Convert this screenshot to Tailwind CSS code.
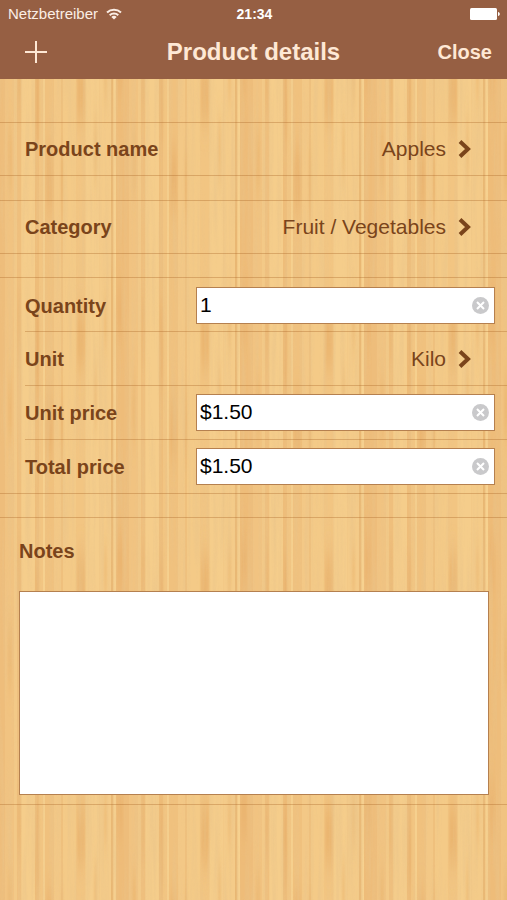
<!DOCTYPE html>
<html lang="en">
<head>
<meta charset="utf-8">
<meta name="viewport" content="width=device-width, initial-scale=1">
<title>Product details</title>
<script src="https://cdn.jsdelivr.net/npm/@tailwindcss/browser@4"></script>
</head>
<body class="relative isolate min-h-screen overflow-x-hidden bg-[#f0c381] font-['Liberation_Sans',Arial,sans-serif] text-[#7a441b]">

<!-- Bamboo backdrop -->
<svg class="absolute inset-0 -z-10 h-full w-full" aria-hidden="true">
  <defs>
    <filter id="soft" x="-20" y="-40" width="164" height="328" filterUnits="userSpaceOnUse"><feGaussianBlur stdDeviation="0.8 14"/></filter>
    <filter id="grain" x="0" y="0" width="1" height="1">
      <feTurbulence type="fractalNoise" baseFrequency="0.22 0.009" numOctaves="3" seed="4"/>
      <feColorMatrix values="0 0 0 0 0.82  0 0 0 0 0.55  0 0 0 0 0.25  1.3 0 0 0 -0.48"/>
    </filter>
    <pattern id="bamboo" width="124" height="248" patternUnits="userSpaceOnUse">
      <rect width="124" height="248" fill="#f3c987"/>
      <g>
        <rect x="0" width="5" height="248" fill="#eebd7b"/>
        <rect x="5" width="9" height="248" fill="#f1c381"/>
        <rect x="17" width="4" height="248" fill="#efbf7d"/>
        <rect x="22" width="13" height="248" fill="#f5cd8b"/>
        <rect x="35" width="4" height="248" fill="#eebd7a"/>
        <rect x="39" width="4" height="248" fill="#f2c582"/>
        <rect x="43" width="2" height="248" fill="#f6d08e"/>
        <rect x="45" width="9" height="248" fill="#f0c17e"/>
        <rect x="54" width="7" height="248" fill="#f3c886"/>
        <rect x="61" width="2" height="248" fill="#efc07d"/>
        <rect x="63" width="13" height="248" fill="#f4ca87"/>
        <rect x="76" width="9" height="248" fill="#f2c582"/>
        <rect x="86" width="13" height="248" fill="#f5cd8b"/>
        <rect x="100" width="11" height="248" fill="#f4cb89"/>
        <rect x="111" width="2" height="248" fill="#e9b773"/>
        <rect x="114" width="2" height="248" fill="#f7d290"/>
        <rect x="116" width="8" height="248" fill="#eebc79"/>
      </g>
      <g filter="url(#soft)" fill="#e5a962">
        <path d="M46 150h7v60h-7z" opacity=".5"/>
        <path d="M77 60h8v60h-8z" opacity=".55"/>
        <path d="M117 40h6v50h-6z" opacity=".35"/>
        <path d="M61 150h2v60h-2zM36 60h3v80h-3zM18 50h2v60h-2z" opacity=".5"/>
        <path d="M94 120h3v60h-3zM104 50h3v50h-3zM8 130h4v60h-4z" opacity=".4"/>
      </g>
    </pattern>
  </defs>
  <rect width="100%" height="100%" fill="url(#bamboo)"/>
  <rect width="100%" height="100%" filter="url(#grain)" opacity=".9"/>
</svg>

<header class="h-[79px] bg-[#965f43] text-[#fee8d5]">
  <div class="grid h-7 grid-cols-3 items-center pr-[6px] pl-2 text-white">
    <div class="flex items-center gap-[8px] text-[15px] leading-5 text-[#fbeee5]">
      <span>Netzbetreiber</span>
      <svg class="h-3 w-4 shrink-0" viewBox="0 0 16 12" fill="none" stroke="currentColor" stroke-width="2" role="img" aria-label="Wi-Fi">
        <path d="M1 4.400a10.300 10.300 0 0 1 14 0"/>
        <path d="M3.700 7.200a6.300 6.300 0 0 1 8.600 0"/>
        <path d="M8 11.600 5.300 9a3.900 3.900 0 0 1 5.400 0z" fill="currentColor" stroke="none"/>
      </svg>
    </div>
    <time class="text-center text-[14px] leading-5 font-bold">21:34</time>
    <svg class="h-3 w-[31px] justify-self-end" viewBox="0 0 31 12" fill="#fff" role="img" aria-label="Battery full">
      <rect width="27" height="12" rx="1.500"/>
      <path d="M28 4c2.400 .5 2.400 3.500 0 4z"/>
    </svg>
  </div>
  <div class="grid h-12 grid-cols-[1fr_auto_1fr] items-center px-[15px]">
    <button type="button" aria-label="Add" class="ml-[10px] size-[22px] justify-self-start">
      <svg class="size-full" viewBox="0 0 22 22" stroke="currentColor" stroke-width="2"><path d="M0 11h22M11 0v22"/></svg>
    </button>
    <h1 class="text-[24px] leading-7 font-bold">Product details</h1>
    <button type="button" class="justify-self-end text-[20px] leading-6 font-bold">Close</button>
  </div>
</header>

<main class="pt-[43px]">
  <section class="border-y border-[#a86426]/35">
    <button type="button" class="flex h-[52px] w-full items-center pr-9 pl-[25px]">
      <span class="text-[20px] leading-6 font-bold">Product name</span>
      <span class="ml-auto text-[21px] leading-6">Apples</span>
      <svg class="ml-3 h-[18px] w-[13px]" viewBox="0 0 13 18" fill="none" stroke="currentColor" stroke-width="4" aria-hidden="true"><path d="M2 1.500 10 9 2 16.500"/></svg>
    </button>
  </section>

  <section class="mt-6 border-y border-[#a86426]/35">
    <button type="button" class="flex h-[52px] w-full items-center pr-9 pl-[25px]">
      <span class="text-[20px] leading-6 font-bold">Category</span>
      <span class="ml-auto text-[21px] leading-6">Fruit / Vegetables</span>
      <svg class="ml-3 h-[18px] w-[13px]" viewBox="0 0 13 18" fill="none" stroke="currentColor" stroke-width="4" aria-hidden="true"><path d="M2 1.500 10 9 2 16.500"/></svg>
    </button>
  </section>

  <section class="mt-[23px] border-y border-[#a86426]/35 pl-[25px]">
    <div class="flex h-[54px] items-center border-b border-[#a86426]/35 pt-[2px] pr-3">
      <label for="quantity" class="w-[171px] shrink-0 text-[20px] leading-6 font-bold">Quantity</label>
      <div class="relative min-w-0 flex-1">
        <input id="quantity" type="text" value="1" class="block h-[37px] w-full border border-[#b5804f] bg-white pr-8 pb-[2px] pl-[3px] text-[21px] text-black outline-none">
        <button type="button" aria-label="Clear quantity" class="absolute top-[10px] right-[6px] size-[17px]">
          <svg class="size-full" viewBox="0 0 17 17"><circle cx="8.500" cy="8.500" r="8.500" fill="#c9c9cb"/><path d="M5 5l7 7M12 5l-7 7" stroke="#fff" stroke-width="2"/></svg>
        </button>
      </div>
    </div>
    <button type="button" class="flex h-[54px] w-full items-center border-b border-[#a86426]/35 pr-9">
      <span class="text-[20px] leading-6 font-bold">Unit</span>
      <span class="ml-auto text-[21px] leading-6">Kilo</span>
      <svg class="ml-3 h-[18px] w-[13px]" viewBox="0 0 13 18" fill="none" stroke="currentColor" stroke-width="4" aria-hidden="true"><path d="M2 1.500 10 9 2 16.500"/></svg>
    </button>
    <div class="flex h-[54px] items-center border-b border-[#a86426]/35 pr-3">
      <label for="unit-price" class="w-[171px] shrink-0 text-[20px] leading-6 font-bold">Unit price</label>
      <div class="relative min-w-0 flex-1">
        <input id="unit-price" type="text" value="$1.50" class="block h-[37px] w-full border border-[#b5804f] bg-white pr-8 pb-[2px] pl-[3px] text-[21px] text-black outline-none">
        <button type="button" aria-label="Clear unit price" class="absolute top-[10px] right-[6px] size-[17px]">
          <svg class="size-full" viewBox="0 0 17 17"><circle cx="8.500" cy="8.500" r="8.500" fill="#c9c9cb"/><path d="M5 5l7 7M12 5l-7 7" stroke="#fff" stroke-width="2"/></svg>
        </button>
      </div>
    </div>
    <div class="flex h-[53px] items-center pr-3">
      <label for="total-price" class="w-[171px] shrink-0 text-[20px] leading-6 font-bold">Total price</label>
      <div class="relative min-w-0 flex-1">
        <input id="total-price" type="text" value="$1.50" class="block h-[37px] w-full border border-[#b5804f] bg-white pr-8 pb-[2px] pl-[3px] text-[21px] text-black outline-none">
        <button type="button" aria-label="Clear total price" class="absolute top-[10px] right-[6px] size-[17px]">
          <svg class="size-full" viewBox="0 0 17 17"><circle cx="8.500" cy="8.500" r="8.500" fill="#c9c9cb"/><path d="M5 5l7 7M12 5l-7 7" stroke="#fff" stroke-width="2"/></svg>
        </button>
      </div>
    </div>
  </section>

  <section class="mt-[23px] border-y border-[#a86426]/35 pt-[21px] pr-[18px] pb-[9px] pl-[19px]">
    <label for="notes" class="block text-[20px] leading-6 font-bold">Notes</label>
    <textarea id="notes" class="mt-7 block h-[204px] w-full resize-none border border-[#b5804f] bg-white p-1 text-[21px] text-black outline-none"></textarea>
  </section>
</main>
</body>
</html>
